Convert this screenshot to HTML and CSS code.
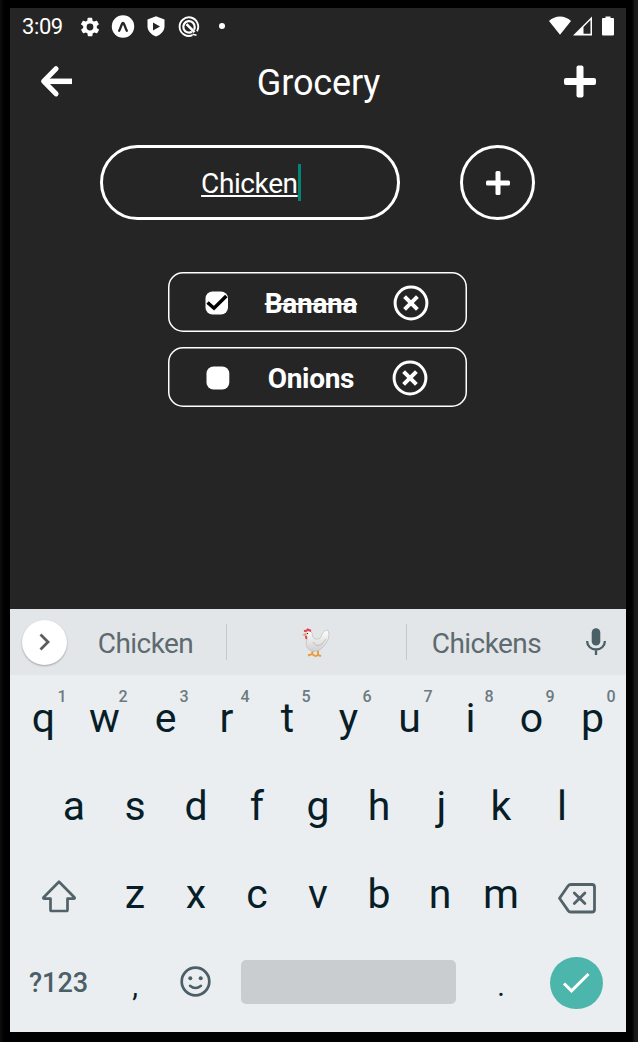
FILE: index.html
```html
<!DOCTYPE html>
<html lang="en">
<head>
<meta charset="utf-8">
<title>Grocery</title>
<link rel="stylesheet" href="styles.css">
</head>
<body>
<main class="screen">
  <div class="status">
    <span class="clock">3:09</span>
    <div class="status-left">
      <svg width="22" height="22" viewBox="0 0 24 24"><path fill="#fff" d="M19.4 13a7.500 7.500 0 0 0 0-2l2.100-1.600a.5.5 0 0 0 .1-.7l-2-3.400a.5.5 0 0 0-.6-.2l-2.500 1a7.300 7.300 0 0 0-1.700-1l-.4-2.600a.5.5 0 0 0-.5-.5h-4a.5.5 0 0 0-.5.5l-.4 2.600a7.300 7.300 0 0 0-1.700 1l-2.500-1a.5.5 0 0 0-.6.2l-2 3.400a.5.5 0 0 0 .1.7L4.600 11a7.500 7.500 0 0 0 0 2l-2.100 1.600a.5.5 0 0 0-.1.7l2 3.400c.1.2.4.3.6.2l2.500-1a7.300 7.300 0 0 0 1.700 1l.4 2.600c0 .3.200.5.500.5h4c.3 0 .5-.2.5-.5l.4-2.600a7.300 7.300 0 0 0 1.700-1l2.500 1c.2.1.5 0 .6-.2l2-3.400a.5.500 0 0 0-.1-.7zM12 15.700a3.700 3.700 0 1 1 0-7.400 3.700 3.700 0 0 1 0 7.400z"/></svg>
      <svg width="24" height="24" viewBox="0 0 24 24"><circle cx="12" cy="11.500" r="11.200" fill="#fff"/><path d="M8.200 15.700C9.800 13.300 10.600 8 12 8s2.200 5.300 3.800 7.700" fill="none" stroke="#252525" stroke-width="2.300" stroke-linecap="round"/></svg>
      <svg width="22" height="22" viewBox="0 0 22 22"><path fill="#fff" d="M11 .3 19.500 3.500v6.700c0 5-4 8.500-8.500 10.300-4.500-1.800-8.500-5.300-8.500-10.300V3.500z"/><path fill="#252525" d="M8 6.500v8l7-4z"/></svg>
      <svg width="22" height="22" viewBox="0 0 22 22"><path d="M14.500 19.200A9.300 9.300 0 1 1 19 15.200" fill="none" stroke="#fff" stroke-width="1.900"/><path d="M14 15.700A5.700 5.700 0 1 1 16.700 11.200q0 1.500-.7 2.500" fill="none" stroke="#fff" stroke-width="2.200"/><path d="m8.500 8.200 8 8" stroke="#fff" stroke-width="2.600"/><path d="m14.500 18.200 4 1" stroke="#fff" stroke-width="1.500"/></svg>
      <svg width="22" height="22" viewBox="0 0 22 22"><circle cx="11" cy="10" r="3" fill="#fff"/></svg>
    </div>
    <div class="status-right">
      <svg width="22" height="20" viewBox="0 0 22 20"><path fill="#fff" d="M0 4C6-2 16-2 22 4L11 17.800z"/></svg>
      <svg width="20" height="20" viewBox="0 0 20 20"><path fill="#fff" fill-rule="evenodd" d="M19-.5v19H0zM10.500 10v6.800h7V3z"/></svg>
      <svg class="battery" width="12" height="20" viewBox="0 0 12 20"><path fill="#fff" d="M3.500-.5h5V1H11q1 0 1 1v15.500q0 1-1 1H1q-1 0-1-1V2q0-1 1-1h2.500z"/></svg>
    </div>
  </div>

  <header class="header">
    <svg width="32" height="32" viewBox="0 0 32 32" fill="none" stroke="#fff"><path stroke-width="5.500" d="M5 16.300h26"/><path stroke-width="5.200" stroke-linecap="round" stroke-linejoin="round" d="M15 3.800 2.700 16.300 15 28.800"/></svg>
    <h1 class="title">Grocery</h1>
    <svg width="32" height="33" viewBox="0 0 32 33" fill="#fff"><rect x="12.500" y=".5" width="7" height="32" rx="2"/><rect y="13" width="32" height="7" rx="2"/></svg>
  </header>

  <div class="entry">
    <div class="field"><span class="typed">Chicken</span><i class="caret"></i></div>
    <button class="add"><svg width="25" height="24" viewBox="-1 0 25 24" fill="#fff"><rect x="9.500" width="5" height="24" rx="1.500"/><rect y="9.500" width="24" height="5" rx="1.500"/></svg></button>
  </div>

  <ul class="list">
    <li class="item item-done">
      <svg width="24" height="24" viewBox="0 0 24 24"><rect x=".5" y=".5" width="22.500" height="23" rx="7" fill="#fff"/><path d="m2.500 11.500 6.500 5.700L21.300 5" fill="none" stroke="#000" stroke-width="3.500"/></svg>
      <span class="name">Banana</span>
      <svg width="36" height="36" viewBox="0 0 36 36" fill="none" stroke="#fff"><circle cx="18" cy="18" r="15.900" stroke-width="3"/><path stroke-width="4" d="m11.600 11.600 12.800 12.800m0-12.800L11.600 24.400"/></svg>
    </li>
    <li class="item item-open">
      <svg width="24" height="24" viewBox="0 0 24 24"><rect x=".5" y=".5" width="22.800" height="23" rx="7" fill="#fff"/></svg>
      <span class="name">Onions</span>
      <svg width="36" height="36" viewBox="0 0 36 36" fill="none" stroke="#fff"><circle cx="18" cy="18" r="15.900" stroke-width="3"/><path stroke-width="4" d="m11.600 11.600 12.800 12.800m0-12.800L11.600 24.400"/></svg>
    </li>
  </ul>

  <section class="keyboard">
    <div class="suggestions">
      <span class="expand"><svg width="14" height="18" viewBox="0 0 14 18"><path d="m2.500 1.500 7.500 7.500-7.500 7.500" fill="none" stroke="#5c5c5c" stroke-width="2.800"/></svg></span>
      <span class="word word-first">Chicken</span>
      <span class="word word-emoji">
        <svg width="28" height="30" viewBox="0 0 28 30">
          <defs><linearGradient id="feather" x2="0" y2="1"><stop offset="0" stop-color="#fff"/><stop offset="1" stop-color="#cfcfcf"/></linearGradient></defs>
          <path d="m11 22-1 4m6-4v5M6 27.500l4-1.500 3 2m0 .500 3-1.500 3 1" stroke="#e99a3c" stroke-width="1.900" fill="none"/>
          <path d="M4 4q3-3 6 1 0 5 3 6 6 1 7-5 2-4 6-4 2 4 0 10-2 3-4 6-4 5.500-10 5.500-7-1-8-7.500 2-4 0-12" fill="url(#feather)" stroke="#bdbdbd" stroke-width=".7"/>
          <path d="M11 14q3 6 9 2l4-5" fill="none" stroke="#b5b5b5" stroke-width=".8"/>
          <path d="M2 4Q1 1 4 2q1-3 3-1 3 0 2 3L6 3 4 4zM3 8q3-1 2 3-2 1-2-3" fill="#e5455d"/>
          <path d="m0 7 4-2v3z" fill="#e99a3c"/><circle cx="5.500" cy="5.500" r=".7" fill="#333"/>
        </svg>
      </span>
      <span class="word word-last">Chickens</span>
      <svg class="mic" width="20" height="28" viewBox="0 0 20 28"><rect x="5.700" y="0.300" width="8.600" height="17.200" rx="4.300" fill="#4b5f67"/><path d="M1.200 13v.8a8.800 7.700 0 0 0 17.600 0V13M10 21.500V27" fill="none" stroke="#4b5f67" stroke-width="2.300"/></svg>
    </div>
    <div class="row">
      <span class="key">q<sup class="hint">1</sup></span><span class="key">w<sup class="hint">2</sup></span><span class="key">e<sup class="hint">3</sup></span><span class="key">r<sup class="hint">4</sup></span><span class="key">t<sup class="hint">5</sup></span><span class="key">y<sup class="hint">6</sup></span><span class="key">u<sup class="hint">7</sup></span><span class="key">i<sup class="hint">8</sup></span><span class="key">o<sup class="hint">9</sup></span><span class="key">p<sup class="hint">0</sup></span>
    </div>
    <div class="row">
      <span class="key">a</span><span class="key">s</span><span class="key">d</span><span class="key">f</span><span class="key">g</span><span class="key">h</span><span class="key key-j">j</span><span class="key">k</span><span class="key">l</span>
    </div>
    <div class="row">
      <span class="key key-wide key-shift"><svg width="34" height="33" viewBox="0 0 34 33"><path d="M17 1.800 1.500 17.500q-.5 1.200.7 1.200h6.300v11q0 1.300 1.300 1.300h14.400q1.300 0 1.300-1.300v-11h6.300q1.200 0 .7-1.200z" fill="none" stroke="#526269" stroke-width="2.700" stroke-linejoin="round"/></svg></span>
      <span class="key">z</span><span class="key">x</span><span class="key">c</span><span class="key">v</span><span class="key">b</span><span class="key">n</span><span class="key">m</span>
      <span class="key key-wide key-delete"><svg width="38" height="31" viewBox="0 0 38 31" fill="none" stroke="#526269" stroke-width="2.800" stroke-linejoin="round"><path d="M13 1.500h21q2.500 0 2.500 2.500v22.500q0 2.500-2.500 2.500H13q-2 0-3-1.600L1.500 15.300 10 3q1-1.500 3-1.500z"/><path stroke-linecap="round" d="m16.300 10 10.600 10.600m0-10.600L16.300 20.600"/></svg></span>
    </div>
    <div class="row row-bottom">
      <span class="symbols">?123</span>
      <span class="key punct comma">,</span>
      <span class="key key-emoji"><svg width="31" height="31" viewBox="0 0 31 31" fill="none" stroke="#4b5f67"><circle cx="15.500" cy="15.500" r="13.800" stroke-width="2.700"/><path d="M10 19.700q5.500 4.600 11 0" stroke-width="2.500" stroke-linecap="round"/><g fill="#4b5f67" stroke="none"><circle cx="10.300" cy="12.300" r="2"/><circle cx="20.700" cy="12.300" r="2"/></g></svg></span>
      <span class="space"></span>
      <span class="key punct">.</span>
      <span class="enter"><svg width="28" height="22" viewBox="0 0 28 22"><path d="m2 11.500 7.500 7.300L26.500 2" fill="none" stroke="#fff" stroke-width="3"/></svg></span>
    </div>
  </section>
</main>
</body>
</html>
```
FILE: styles.css
```css
* { box-sizing: border-box; }
body {
  margin: 0;
  height: 1042px;
  padding: 8px 12px 10px 10px;
  background: linear-gradient(90deg, #0e0e0e 0, #000 4px, #000 632px, #1a1a1a 635px);
  font-family: Roboto, "Liberation Sans", sans-serif;
  overflow: hidden;
}
svg { display: block; flex: none; overflow: visible; }
.screen {
  height: 1024px;
  display: flex;
  flex-direction: column;
  background: #252525;
  color: #fff;
}
.status {
  height: 37px;
  display: flex;
  align-items: center;
  padding: 0 12px;
}
.clock { width: 57px; font-size: 22px; line-height: 26px; letter-spacing: -.4px; }
.status-left { display: flex; align-items: center; gap: 11px; }
.status-left svg:nth-child(2) { margin: 0 -1px; }
.status-right { display: flex; align-items: center; gap: 2px; margin-left: auto; }
.battery { margin-left: 7px; }

.header {
  height: 72px;
  display: flex;
  align-items: center;
  justify-content: space-between;
  padding: 0 30px 0 31px;
}
.title { margin: 4px 0 0; font-size: 36px; font-weight: 400; line-height: 44px; letter-spacing: -.15px; }

.entry { display: flex; padding: 28px 0 0 90.400px; gap: 60px; }
.field {
  width: 300px;
  height: 75px;
  border: 3px solid #fff;
  border-radius: 38px;
  display: flex;
  align-items: center;
  justify-content: center;
  padding-left: 1px;
  font-size: 28px;
  letter-spacing: -.4px;
}
.typed {
  padding-top: 2px;
  text-decoration: underline;
  text-decoration-thickness: 1.500px;
  text-underline-offset: 2px;
  text-decoration-skip-ink: none;
}
.caret { width: 3px; height: 37px; background: #008577; }
.add {
  width: 75px;
  height: 75px;
  padding: 0;
  border: 3px solid #fff;
  border-radius: 50%;
  background: none;
  display: flex;
  align-items: center;
  justify-content: center;
}

.list {
  margin: 52px 0 0;
  padding: 0 0 0 158px;
  list-style: none;
  display: flex;
  flex-direction: column;
  gap: 15px;
}
.item {
  width: 299.400px;
  height: 60px;
  box-shadow: inset 0 0 0 1.500px #fff;
  border-radius: 15px;
  display: flex;
  align-items: center;
  justify-content: space-between;
  padding-top: 1px;
  font-size: 28px;
  font-weight: 700;
  letter-spacing: -.3px;
}
.item-done { padding-left: 36.500px; padding-right: 38px; }
.item-open { padding-left: 38px; padding-right: 39.500px; }
.name { padding-top: 1px; }
.item-done .name { text-decoration: line-through; text-decoration-thickness: 2px; }

.keyboard {
  margin-top: auto;
  height: 423px;
  background: #ebeef1;
  color: #071e28;
}
.suggestions {
  height: 66px;
  display: flex;
  align-items: center;
  background: #e3e6e9;
  color: #5d6b71;
  font-size: 28px;
  letter-spacing: -.55px;
}
.expand {
  width: 45px;
  height: 45px;
  margin-left: 12px;
  border-radius: 50%;
  background: #fff;
  box-shadow: 0 1px 2px rgba(0, 0, 0, .3);
  display: flex;
  align-items: center;
  justify-content: center;
}
.word { height: 36px; padding-top: 2px; display: flex; align-items: center; justify-content: center; }
.word-first { width: 160px; padding-right: 2px; border-right: 1.500px solid #c3c8cb; }
.word-emoji { width: 180px; padding-right: 2px; border-right: 1.500px solid #c3c8cb; }
.word-last { width: 159px; }
.mic { margin-left: 20px; }

.row {
  height: 88px;
  display: flex;
  align-items: center;
  justify-content: center;
}
.key {
  width: 61px;
  height: 88px;
  padding-bottom: 2px;
  display: flex;
  align-items: center;
  justify-content: center;
  position: relative;
  font-size: 41px;
}
.key-j { padding-left: 3px; }
.hint {
  position: absolute;
  top: 12px;
  left: 39px;
  width: 20px;
  text-align: center;
  font-size: 16px;
  line-height: 20px;
  font-weight: 500;
  color: #6c7a80;
}
.key-wide { width: 91px; }
.key-shift { padding: 2px 0 0; }
.key-delete { padding: 6px 0 0; }
.key-emoji { padding: 0 0 3px; }
.symbols { width: 92px; padding-left: 1px; text-align: center; font-size: 27px; font-weight: 500; color: #4b5f67; }
.punct { font-size: 29px; padding: 6px 1px 0 0; }
.comma { padding-left: 2px; }
.row-bottom { justify-content: flex-start; padding-left: 2px; }
.space { width: 214.500px; height: 43.500px; margin: 0 15.500px 2px 15px; border-radius: 5px; background: #c9cdd0; }
.enter {
  width: 52.500px;
  height: 52.500px;
  margin-left: 18px;
  border-radius: 50%;
  background: #4db6ac;
  display: flex;
  align-items: center;
  justify-content: center;
}
```
